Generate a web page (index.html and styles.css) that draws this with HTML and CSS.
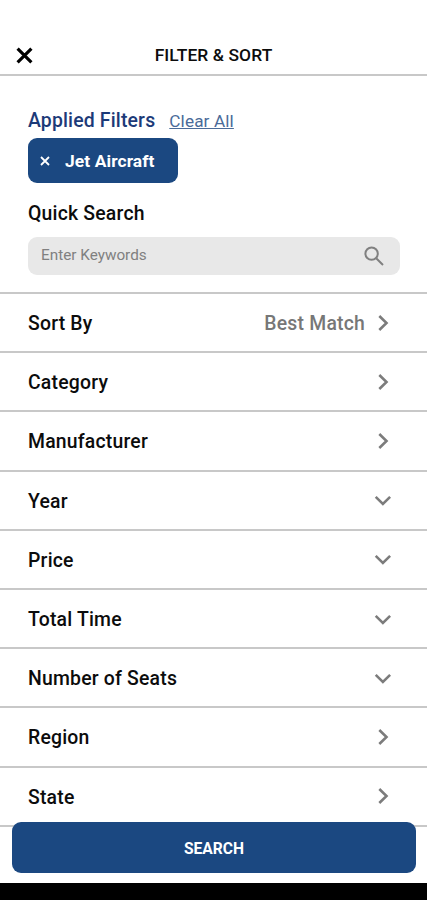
FILE: index.html
```html
<!DOCTYPE html>
<html lang="en">
<head>
<meta charset="utf-8">
<title>Filter &amp; Sort</title>
<link rel="stylesheet" href="styles.css">
</head>
<body>
<div class="screen">
  <header class="header">
    <svg class="close" viewBox="0 0 16 16"><path d="M1.5 1.5l13 13M14.5 1.5l-13 13"/></svg>
    <h1 class="title">FILTER &amp; SORT</h1>
  </header>
  <main>
    <section class="filters">
      <div class="applied"><h2 class="applied-title">Applied Filters</h2><a class="clear">Clear All</a></div>
      <div class="chip"><svg class="chip-x" viewBox="0 0 10 10"><path d="M1 1l8 8M9 1l-8 8"/></svg><span class="chip-label">Jet Aircraft</span></div>
      <h2 class="quick">Quick Search</h2>
      <div class="search"><span class="placeholder">Enter Keywords</span><svg class="glass" viewBox="0 0 20 20"><circle cx="7.6" cy="7.6" r="6.2"/><path d="M12.2 12.2l6.8 6.8"/></svg></div>
    </section>
    <ul class="list">
      <li class="row"><span class="label">Sort By</span><span class="value">Best Match</span><svg class="chev" viewBox="0 0 20 20"><path d="M6.3 3l7.2 7-7.2 7"/></svg></li>
      <li class="row"><span class="label">Category</span><svg class="chev" viewBox="0 0 20 20"><path d="M6.3 3l7.2 7-7.2 7"/></svg></li>
      <li class="row"><span class="label">Manufacturer</span><svg class="chev" viewBox="0 0 20 20"><path d="M6.3 3l7.2 7-7.2 7"/></svg></li>
      <li class="row"><span class="label">Year</span><svg class="chev" viewBox="0 0 20 20"><path d="M2.7 6.9l7.2 7 7.2-7"/></svg></li>
      <li class="row"><span class="label">Price</span><svg class="chev" viewBox="0 0 20 20"><path d="M2.7 6.9l7.2 7 7.2-7"/></svg></li>
      <li class="row"><span class="label">Total Time</span><svg class="chev" viewBox="0 0 20 20"><path d="M2.7 6.9l7.2 7 7.2-7"/></svg></li>
      <li class="row"><span class="label">Number of Seats</span><svg class="chev" viewBox="0 0 20 20"><path d="M2.7 6.9l7.2 7 7.2-7"/></svg></li>
      <li class="row"><span class="label">Region</span><svg class="chev" viewBox="0 0 20 20"><path d="M6.3 3l7.2 7-7.2 7"/></svg></li>
      <li class="row"><span class="label">State</span><svg class="chev" viewBox="0 0 20 20"><path d="M6.3 3l7.2 7-7.2 7"/></svg></li>
    </ul>
  </main>
  <footer class="footer"><button class="submit">SEARCH</button></footer>
  <div class="navbar"></div>
</div>
</body>
</html>
```
FILE: styles.css
```css
* { box-sizing: border-box; }
body { margin: 0; background: #fff; font-family: Roboto, sans-serif; color: #0c0c0c; }
h1, h2, ul { margin: 0; padding: 0; font-weight: 500; }
svg { fill: none; flex: none; }
.screen { height: 900px; display: flex; flex-direction: column; overflow: hidden; }
.header { height: 76px; padding: 36px 16px 0; border-bottom: 2px solid #c8c8c8; display: grid; grid-template-columns: 16px 1fr 16px; align-items: center; }
.close { width: 17px; height: 17px; stroke: #000; stroke-width: 3; }
.title { font-size: 17.4px; line-height: 38px; text-align: center; letter-spacing: .1px; }
.filters { height: 216px; padding: 33px 27px 0 28px; }
.applied { display: flex; align-items: baseline; gap: 14px; height: 29px; line-height: 24px; }
.applied-title { font-size: 19.4px; letter-spacing: .17px; color: #1c3a78; }
.clear { font-size: 17.2px; letter-spacing: .12px; color: #4a6b99; text-decoration: underline; text-decoration-thickness: 1px; }
.chip { width: 150px; height: 45px; border-radius: 9px; background: #1b4881; color: #fff; display: flex; align-items: center; padding-left: 12px; gap: 15px; }
.chip-x { width: 10px; height: 10px; stroke: #fff; stroke-width: 1.8; }
.chip-label { font-size: 17.4px; letter-spacing: .1px; font-weight: 700; padding-top: 1px; }
.quick { font-size: 19.4px; letter-spacing: .2px; line-height: 24px; margin: 19px 0 11px; }
.search { height: 38px; border-radius: 9px; background: #e8e8e8; display: flex; align-items: center; justify-content: space-between; padding: 0 16px 0 13px; color: #808080; }
.placeholder { font-size: 15.3px; padding-bottom: 2px; }
.glass { width: 20px; height: 20px; stroke: #808080; stroke-width: 2; }
.list { list-style: none; }
.row { height: 59.2px; border-top: 2px solid #c8c8c8; padding: 0 34px 0 28px; display: flex; align-items: center; }
.row:last-child { height: 61.2px; border-bottom: 2px solid #c8c8c8; }
.label { flex: 1; font-size: 19.4px; letter-spacing: .2px; font-weight: 500; padding-top: 2px; }
.value { font-size: 19.4px; letter-spacing: .2px; font-weight: 500; color: #777; margin-right: 8px; padding-top: 2px; }
.chev { width: 20px; height: 20px; stroke: #7c7c7c; stroke-width: 2.6; }
.footer { position: absolute; left: 12px; top: 822px; width: 404px; height: 51px; }
.submit { width: 100%; height: 100%; border: 0; border-radius: 9px; background: #1b4881; color: #fff; font: 700 15.6px Roboto, sans-serif; padding-top: 3px; }
.navbar { height: 17px; background: #000; margin-top: auto; }
```
